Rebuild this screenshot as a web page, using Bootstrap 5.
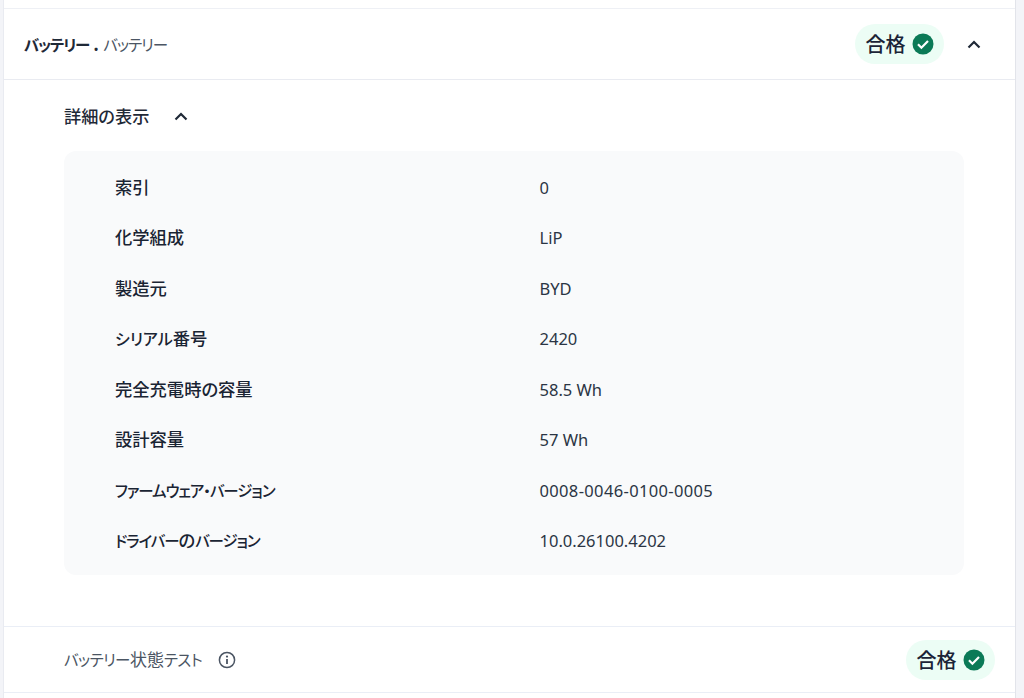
<!DOCTYPE html>
<html lang="ja">
<head>
<meta charset="utf-8">
<title>バッテリー</title>
<link href="https://cdn.jsdelivr.net/npm/bootstrap@5.3.0/dist/css/bootstrap.min.css" rel="stylesheet">
<style>
html,body{height:698px;overflow:hidden;background:#f3f4f8;}
body{font-family:"Noto Sans","Noto Sans CJK JP",sans-serif;color:#1f2937;font-size:16px;font-feature-settings:"palt";}
.sheet{margin:0 8px 0 3px;width:1013px;height:698px;background:#fff;border-left:1px solid #e9ebf1;border-right:1px solid #e2e4ea;padding-top:8px;}
.head-row{height:72px;border-top:1px solid #eef0f5;border-bottom:1px solid #e9ebf1;padding:0 29px 0 20px;}
.head-title{font-size:15.500px;color:#1f2937;gap:5px;padding-top:3px;}
.head-sub{font-weight:400;color:#4b5563;letter-spacing:-1px;}
.head-main{font-weight:600;letter-spacing:-1.200px;}
.head-dot{font-size:11px;font-weight:700;padding-top:7px;}
.head-actions{gap:18px;}
.pass-pill{height:40px;width:89px;border-radius:20px;background:#ecfdf5;font-size:20px;font-weight:500;color:#1b2437;gap:6px;}
.pill-text{padding-top:2px;}
.chev-btn{width:24px;height:24px;}
.detail-wrap{padding:24px 51px 0 60px;}
.detail-toggle{font-size:17.200px;font-weight:500;color:#1f2937;gap:25px;height:24px;padding-top:1px;}
.info-panel{margin-top:23px;background:#f9fafb;border-radius:12px;padding:11px 0 9px 51px;height:424px;}
.info-row{height:50.500px;}
.info-key{width:424.500px;font-weight:500;font-size:17.300px;color:#1a2433;padding-top:1px;}
.kana{font-size:15.500px;font-weight:500;letter-spacing:-1.100px;}
.kana-loose{font-size:16px;font-weight:500;}
.info-val{font-size:16.500px;color:#2b3544;padding-top:2px;}
.serial-val{letter-spacing:.35px;}
.test-row{margin-top:51px;height:67px;border-top:1px solid #eaeef6;border-bottom:1px solid #eaeef6;padding:0 20px 0 60px;}
.test-name{color:#4b5563;gap:16px;padding-top:1px;}
.test-text{font-size:17px;}
.test-text .kana{font-weight:400;letter-spacing:-.6px;}
</style>
</head>
<body>
<div class="sheet">
  <div class="head-row d-flex align-items-center justify-content-between">
    <div class="head-title d-flex align-items-center"><span class="head-main">バッテリー</span><span class="head-dot">•</span><span class="head-sub">バッテリー</span></div>
    <div class="head-actions d-flex align-items-center">
      <div class="pass-pill d-flex align-items-center justify-content-center"><span class="pill-text">合格</span>
        <svg width="22" height="22" viewBox="0 0 22 22"><circle cx="11" cy="11" r="10.500" fill="#0b7a57"/><path d="M6 11.300l3.400 3.400L16 8" fill="none" stroke="#fff" stroke-width="2.200"/></svg>
      </div>
      <div class="chev-btn d-flex align-items-center justify-content-center">
        <svg width="14" height="9" viewBox="0 0 14 9"><path d="M1.500 7.500L7 2l5.500 5.500" fill="none" stroke="#1f2937" stroke-width="2.200"/></svg>
      </div>
    </div>
  </div>
  <div class="detail-wrap">
    <div class="detail-toggle d-flex align-items-center">詳細の表示
      <svg width="14" height="9" viewBox="0 0 14 9"><path d="M1.500 7.500L7 2l5.500 5.500" fill="none" stroke="#1f2937" stroke-width="2.200"/></svg>
    </div>
    <div class="info-panel">
      <div class="info-row d-flex align-items-center"><div class="info-key">索引</div><div class="info-val">0</div></div>
      <div class="info-row d-flex align-items-center"><div class="info-key">化学組成</div><div class="info-val">LiP</div></div>
      <div class="info-row d-flex align-items-center"><div class="info-key">製造元</div><div class="info-val">BYD</div></div>
      <div class="info-row d-flex align-items-center"><div class="info-key"><span class="kana-loose">シリアル</span>番号</div><div class="info-val">2420</div></div>
      <div class="info-row d-flex align-items-center"><div class="info-key">完全充電時の容量</div><div class="info-val">58.5 Wh</div></div>
      <div class="info-row d-flex align-items-center"><div class="info-key">設計容量</div><div class="info-val">57 Wh</div></div>
      <div class="info-row d-flex align-items-center"><div class="info-key"><span class="kana">ファームウェア・バージョン</span></div><div class="info-val serial-val">0008-0046-0100-0005</div></div>
      <div class="info-row d-flex align-items-center"><div class="info-key"><span class="kana">ドライバー</span>の<span class="kana">バージョン</span></div><div class="info-val">10.0.26100.4202</div></div>
    </div>
  </div>
  <div class="test-row d-flex align-items-center justify-content-between">
    <div class="test-name d-flex align-items-center"><span class="test-text"><span class="kana">バッテリー</span>状態<span class="kana">テスト</span></span>
      <svg width="18" height="18" viewBox="0 0 18 18"><circle cx="9" cy="9" r="7.600" fill="none" stroke="#4b5563" stroke-width="1.500"/><circle cx="9" cy="5.600" r="1.100" fill="#4b5563"/><path d="M9 8v5" stroke="#4b5563" stroke-width="1.800"/></svg>
    </div>
    <div class="pass-pill d-flex align-items-center justify-content-center"><span class="pill-text">合格</span>
      <svg width="22" height="22" viewBox="0 0 22 22"><circle cx="11" cy="11" r="10.500" fill="#0b7a57"/><path d="M6 11.300l3.400 3.400L16 8" fill="none" stroke="#fff" stroke-width="2.200"/></svg>
    </div>
  </div>
</div>
<script src="https://cdn.jsdelivr.net/npm/bootstrap@5.3.0/dist/js/bootstrap.bundle.min.js"></script>
</body>
</html>
